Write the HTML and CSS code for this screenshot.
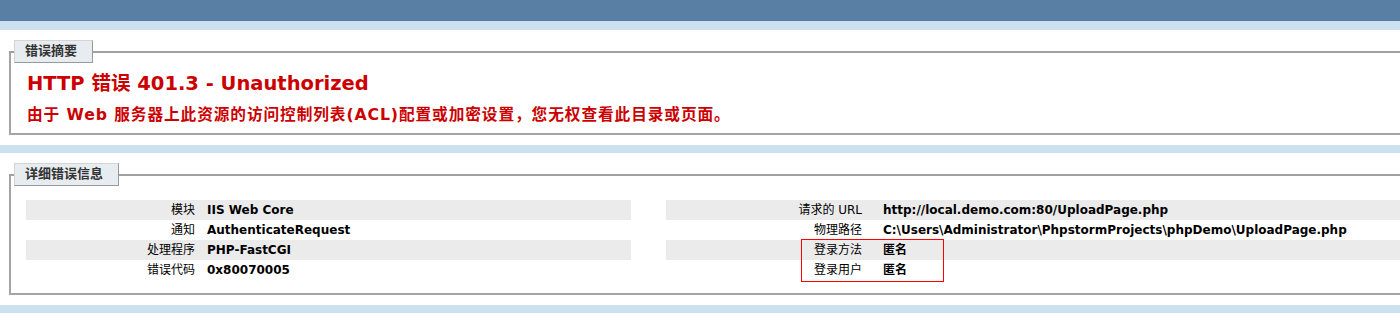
FILE: index.html
```
<!DOCTYPE html>
<html lang="zh-CN">
<head>
<meta charset="utf-8">
<title>IIS 详细错误 - 401.3 - Unauthorized</title>
<link rel="stylesheet" href="styles.css">
</head>
<body>
<div class="header"></div>
<div class="container">
  <fieldset class="box summary">
    <legend>错误摘要</legend>
    <h2>HTTP 错误 401.3 - Unauthorized</h2>
    <h3>由于 Web 服务器上此资源的访问控制列表(ACL)配置或加密设置，您无权查看此目录或页面。</h3>
  </fieldset>
</div>
<div class="container">
  <fieldset class="box details">
    <legend>详细错误信息</legend>
    <div class="details-grid">
      <div class="details-left">
        <table>
          <tr class="alt"><th>模块</th><td>IIS Web Core</td></tr>
          <tr><th>通知</th><td>AuthenticateRequest</td></tr>
          <tr class="alt"><th>处理程序</th><td>PHP-FastCGI</td></tr>
          <tr><th>错误代码</th><td>0x80070005</td></tr>
        </table>
      </div>
      <div class="details-right">
        <table>
          <tr class="alt"><th>请求的 URL</th><td>http://local.demo.com:80/UploadPage.php</td></tr>
          <tr><th>物理路径</th><td>C:\Users\Administrator\PhpstormProjects\phpDemo\UploadPage.php</td></tr>
          <tr class="alt"><th>登录方法</th><td>匿名</td></tr>
          <tr><th>登录用户</th><td>匿名</td></tr>
        </table>
        <svg class="mark" width="143" height="43" viewBox="0 0 143 43" aria-hidden="true"><rect x="0.5" y="0.5" width="142" height="42" fill="none" stroke="#ff0000" stroke-width="1"/></svg>
      </div>
    </div>
  </fieldset>
</div>
<div class="container last"></div>
</body>
</html>
```

FILE: styles.css
```
html, body {
  margin: 0;
  padding: 0;
}
body {
  background: #CBE1EF;
  font-family: "DejaVu Sans", "Noto Sans CJK SC", sans-serif;
  font-size: 11.2px;
  color: #000;
  overflow: hidden;
}
.header {
  height: 21px;
  background: #5A7FA5;
}
.container {
  background: #fff;
  margin-top: 9px;
  padding: 10px 0 10px 9px;
  overflow: hidden;
}
.container + .container {
  margin-top: 8px;
}
.container.last {
  height: 20px;
  padding: 0;
}
.box {
  margin: 0;
  width: 1729px;
  padding: 0 15px 9px 15px;
  border-style: solid;
  border-color: #a4a4a4;
  border-width: 2px;
  border-top-color: #a0a0a0;
}
legend {
  margin: 0 0 8px -12px;
  padding: 2px 15px 4px 10px;
  background: #E7ECF0;
  border-top: 1px solid #d4d4d4;
  border-left: 1px solid #d4d4d4;
  border-right: 1px solid #999;
  border-bottom: 1px solid #999;
  color: #333;
  font-weight: bold;
  font-size: 13px;
  line-height: 15px;
}
h2 {
  margin: 2px 0 0 1px;
  font-size: 19.5px;
  line-height: 22px;
  color: #CC0000;
  font-weight: bold;
}
h3 {
  margin: 10px 0 0 1px;
  font-size: 15.7px;
  line-height: 19px;
  letter-spacing: 0.9px;
  color: #CC0000;
  font-weight: bold;
}
.details-grid {
  display: flex;
  gap: 35px;
  margin: 6px 0 4px 0;
}
.details-left {
  width: 605px;
  flex: none;
}
.details-right {
  width: 1089px;
  flex: none;
  position: relative;
}
table {
  width: 100%;
  border-collapse: collapse;
  margin: 0;
}
tr {
  height: 20px;
}
tr.alt {
  background: #ebebeb;
}
th, td {
  padding: 0;
  vertical-align: middle;
  line-height: 14px;
  white-space: nowrap;
}
th {
  font-weight: normal;
  font-size: 12px;
  text-align: right;
}
td {
  font-weight: bold;
  font-size: 12px;
  text-align: left;
}
.details-left th {
  width: 169px;
  padding-right: 12px;
}
.details-right th {
  width: 196px;
  padding-right: 21px;
}
.mark {
  position: absolute;
  left: 135px;
  top: 39px;
  display: block;
}
```
